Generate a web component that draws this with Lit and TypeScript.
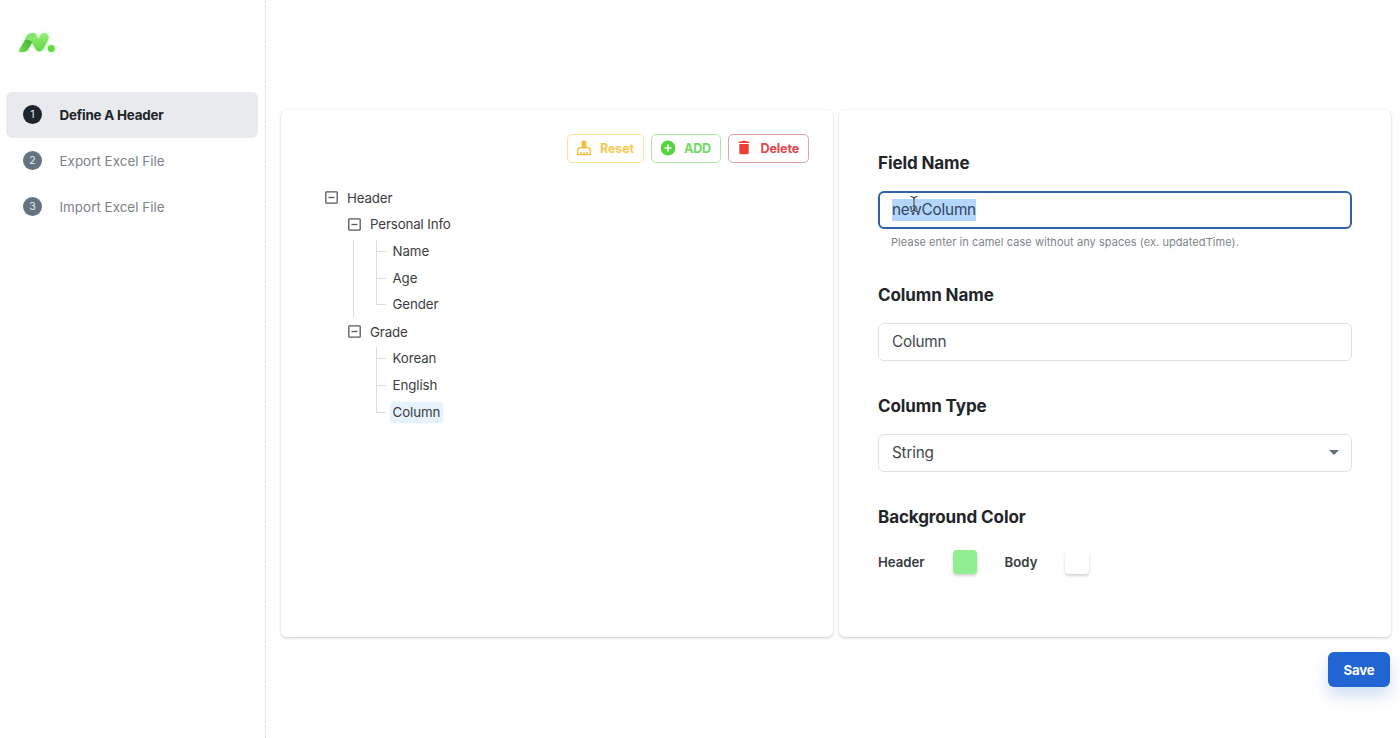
import { LitElement, html, css } from "lit";
import { customElement, property } from "lit/decorators.js";

interface TreeItem {
  label: string;
  selected?: boolean;
  children?: TreeItem[];
}

const STEPS = ["Define A Header", "Export Excel File", "Import Excel File"];

const TREE: TreeItem = {
  label: "Header",
  children: [
    { label: "Personal Info", children: [{ label: "Name" }, { label: "Age" }, { label: "Gender" }] },
    { label: "Grade", children: [{ label: "Korean" }, { label: "English" }, { label: "Column", selected: true }] },
  ],
};

@customElement("side-nav")
class SideNav extends LitElement {
  static styles = css`
    :host { display: block; box-sizing: border-box; width: 266px; height: 738px; padding: 32px 8px 0 6px; border-right: 1px dashed #d9dde1; }
    .logo { display: block; width: 38px; height: 22px; margin: 0 0 37.5px 12px; filter: drop-shadow(0 0 1.5px rgba(130, 240, 100, 0.5)); }
    .step { display: flex; align-items: center; height: 46px; width: 252px; box-sizing: border-box; border-radius: 6px; padding-left: 17px; color: #7d8288; font-size: 13.4px; letter-spacing: 0.02px; }
    .step.on { background: #e8eaed; color: #212529; font-weight: 700; letter-spacing: -0.2px; }
    .num { display: flex; align-items: center; justify-content: center; width: 19px; height: 19px; margin-right: 17.5px; border-radius: 50%; background: #637381; color: #e8ecef; font-size: 10.5px; font-weight: 400; letter-spacing: 0; }
    .on .num { background: #1c252e; }
  `;
  render() {
    return html`
      <svg class="logo" viewBox="0 0 38 22">
        <defs>
          <linearGradient id="a" x1="0" y1="1" x2="1" y2="0"><stop offset="0" stop-color="#72dc50" /><stop offset="1" stop-color="#3aa52d" /></linearGradient>
          <linearGradient id="b" x1="0" y1="0" x2="0" y2="1"><stop offset="0" stop-color="#98ec7a" /><stop offset="1" stop-color="#5fdb43" /></linearGradient>
        </defs>
        <path d="M12 2C14 .5 17 .7 18.2 3L20.3 7 22.5 3C24 .5 27.5 .5 29.5 2.5 31 4 31 6 30 8L25.5 16.5C23.6 20 19.5 20.3 17.5 17L11.5 6.5Z" fill="url(#b)" />
        <path d="M12 1.8C9.5 2.5 8.5 5 7.2 7.5L1.2 18C.6 19.2 1.2 20 2.5 20H5.5C8 20 9.4 18.8 10.7 16.5L14.3 10Z" fill="url(#a)" />
        <path d="M12 1.8C10 2.4 9 4.5 7 8 10 7.3 12 8.3 13.4 10L17.7 2.3C16 .7 13.5 .9 12 1.8Z" fill="#86e46b" />
        <circle cx="33.2" cy="16.4" r="3.5" fill="#5ddd42" />
      </svg>
      ${STEPS.map((s, i) => html`<div class="step ${i === 0 ? "on" : ""}"><span class="num">${i + 1}</span><span>${s}</span></div>`)}
    `;
  }
}

@customElement("header-tree")
class HeaderTree extends LitElement {
  @property({ attribute: false }) item!: TreeItem;
  static styles = css`
    :host { display: block; color: #3b3d40; font-size: 13.3px; letter-spacing: -0.13px; }
    .row { display: flex; align-items: center; height: 26.8px; }
    .box { width: 13px; height: 13px; margin-right: 9px; flex: none; }
    .label { padding: 0 3px; margin-left: -4px; line-height: 21px; border-radius: 4px; letter-spacing: -0.08px; }
    .picked { background: #e6f3fd; box-shadow: 0 0 2px #e6f3fd; }
    .kids { padding-left: 23px; }
    .branch { display: flex; }
    .rail { width: 23px; flex: none; box-sizing: border-box; padding-top: 2px; }
    .rail::before { content: ""; display: block; height: 100%; margin-left: 5px; border-left: 1px solid #dcdcdc; }
    .rail.blank::before { border-color: transparent; }
    .leaf { display: flex; align-items: center; height: 26.8px; }
    .stem { width: 22.5px; height: 100%; display: flex; flex: none; }
    .stem::before { content: ""; margin-left: 5px; width: 1px; background: #dcdcdc; height: 100%; }
    .first .stem::before { height: 25px; margin-top: 2px; }
    .last .stem::before { height: 14px; }
    .stem::after { content: ""; width: 9px; height: 1px; background: #dcdcdc; margin-top: 13px; }
  `;
  private toggle() {
    return html`<svg class="box" viewBox="0 0 13 13" fill="none" stroke="#55585b" stroke-width="1.3"><rect x=".8" y=".8" width="11.4" height="11.4" rx=".8" /><path d="M3.5 6.5h6" /></svg>`;
  }
  private group(item: TreeItem, last: boolean) {
    return html`
      <div class="row">${this.toggle()}<span>${item.label}</span></div>
      <div class="branch">
        <div class="rail ${last ? "blank" : ""}"></div>
        <div>
          ${item.children!.map((c, i, all) => html`
            <div class="leaf ${i === 0 ? "first" : ""} ${i === all.length - 1 ? "last" : ""}">
              <span class="stem"></span><span class="label ${c.selected ? "picked" : ""}">${c.label}</span>
            </div>`)}
        </div>
      </div>`;
  }
  render() {
    const kids = this.item.children!;
    return html`
      <div class="row">${this.toggle()}<span>${this.item.label}</span></div>
      <div class="kids">${kids.map((k, i) => this.group(k, i === kids.length - 1))}</div>
    `;
  }
}

@customElement("app-root")
class AppRoot extends LitElement {
  static styles = css`
    :host { display: flex; width: 1400px; height: 738px; overflow: hidden; background: #fff; color: #212529; font-family: Inter, "Open Sans", sans-serif; }
    side-nav { flex: none; }
    main { flex: 1; padding: 109.5px 9px 0 15px; }
    .cards { display: grid; grid-template-columns: 552px 552px; gap: 6px; }
    .card { box-sizing: border-box; height: 527px; border-radius: 6px; background: #fff; box-shadow: 0 1px 3px rgba(80, 95, 105, 0.3), 0 0 2px rgba(80, 95, 105, 0.05); }
    .tools { display: flex; justify-content: flex-end; gap: 7px; padding: 24px 24px 0 0; }
    .btn { display: flex; align-items: center; box-sizing: border-box; height: 29px; border: 1px solid; border-radius: 5px; font-size: 12.6px; font-weight: 700; padding-left: 8px; }
    .btn svg { width: 16px; height: 16px; margin-right: 8px; flex: none; }
    .reset { width: 77px; color: #f6cb52; border-color: #fbe49c; letter-spacing: -0.15px; }
    .add { width: 70px; color: #71d965; border-color: #ade9a5; letter-spacing: -0.2px; }
    .delete { width: 81px; color: #dd4a4c; border-color: #e0a4a6; letter-spacing: -0.15px; }
    .delete svg { margin-left: -1px; margin-right: 8.5px; }
    header-tree { margin: 21.8px 0 0 44px; }
    .form { padding: 43px 39px 0 39px; }
    h3 { margin: 0; font-size: 17px; line-height: 20px; font-weight: 700; letter-spacing: -0.1px; }
    .input { display: flex; align-items: center; box-sizing: border-box; height: 38.5px; margin-top: 18px; border: 1px solid #dfe2e5; border-radius: 6px; padding: 0 13px; font-size: 15.3px; letter-spacing: -0.2px; color: #43474b; justify-content: space-between; }
    .input.focus { border: 2px solid #2f62aa; padding: 0.5px 12px 0; }
    .pick { position: relative; background: #b4d6fc; line-height: 22px; color: #30475f; }
    .cursor { position: absolute; left: 17px; top: -4px; width: 10px; height: 18px; }
    .help { margin: 5.5px 0 0 13px; font-size: 11px; line-height: 14px; letter-spacing: 0.06px; color: #7d858c; }
    .name { margin-top: 36px; }
    .next { margin-top: 34.5px; }
    .colors { display: flex; align-items: center; margin-top: 23.5px; font-size: 13.2px; font-weight: 600; color: #373c41; }
    .swatch { width: 24px; height: 24px; border-radius: 4px; box-shadow: 0 2px 3px rgba(60, 70, 80, 0.24); }
    .green { background: #90ee90; margin: 0 28px; }
    .white { background: #fff; margin-left: 28px; }
    .foot { display: flex; justify-content: flex-end; padding-top: 15.5px; }
    .save { width: 62px; height: 35px; margin-right: 1px; border-radius: 6px; background: #2065d1; color: #fff; font-size: 13.2px; letter-spacing: -0.15px; font-weight: 700; display: flex; align-items: center; justify-content: center; box-shadow: 0 8px 16px rgba(32, 101, 209, 0.22); }
    .arrow { width: 10px; height: 5px; margin-right: -0.5px; }
  `;
  render() {
    return html`
      <side-nav></side-nav>
      <main>
        <div class="cards">
          <section class="card">
            <div class="tools">
              <div class="btn reset">
                <svg viewBox="0 0 16 16" fill="none" stroke="#f1bd38" stroke-width="1.4" stroke-linejoin="round"><path d="M6.3 7.5V2.2Q8 -.4 9.7 2.2V7.5Z" fill="#f1bd38" /><path d="M1.6 14.6V11Q1.6 7.6 4.5 7.6h7Q14.4 7.6 14.4 11v3.6ZM5 14.5v-2.4M8 14.5v-2.4M11 14.5v-2.4" /></svg>Reset
              </div>
              <div class="btn add">
                <svg viewBox="0 0 16 16"><circle cx="8" cy="8" r="7.4" fill="#54d63b" /><path d="M8 4.6v6.8M4.6 8h6.8" stroke="#fff" stroke-width="1.6" /></svg>ADD
              </div>
              <div class="btn delete">
                <svg viewBox="0 0 16 16" fill="#ee3d38"><path d="M2.7 1.6H5.5L6.2.8h3.6L10.5 1.6h2.8v1.5H2.7ZM3.3 4.1h9.4v8.6q0 1.5-1.5 1.5H4.8q-1.5 0-1.5-1.5Z" /></svg>Delete
              </div>
            </div>
            <header-tree .item=${TREE}></header-tree>
          </section>
          <section class="card form">
            <h3>Field Name</h3>
            <div class="input focus">
              <span class="pick">newColumn<svg class="cursor" viewBox="0 0 10 18" fill="none"><path d="M1.5 1.5Q4.5 1.5 5 4 5.5 1.5 8.5 1.5M5 4v10M1.5 16.5Q4.5 16.5 5 14 5.5 16.5 8.5 16.5M3.5 11h3" stroke="#fff" stroke-width="2.4" opacity=".6" /><path d="M1.5 1.5Q4.5 1.5 5 4 5.5 1.5 8.5 1.5M5 4v10M1.5 16.5Q4.5 16.5 5 14 5.5 16.5 8.5 16.5M3.5 11h3" stroke="#2c3136" stroke-width="1.1" /></svg></span>
            </div>
            <p class="help">Please enter in camel case without any spaces (ex. updatedTime).</p>
            <h3 class="name">Column Name</h3>
            <div class="input"><span>Column</span></div>
            <h3 class="next">Column Type</h3>
            <div class="input"><span>String</span><svg class="arrow" viewBox="0 0 10 5"><path d="M0 0h10L5 5Z" fill="#637078" /></svg></div>
            <h3 class="next">Background Color</h3>
            <div class="colors"><span>Header</span><span class="swatch green"></span><span>Body</span><span class="swatch white"></span></div>
          </section>
        </div>
        <div class="foot"><div class="save">Save</div></div>
      </main>
    `;
  }
}
